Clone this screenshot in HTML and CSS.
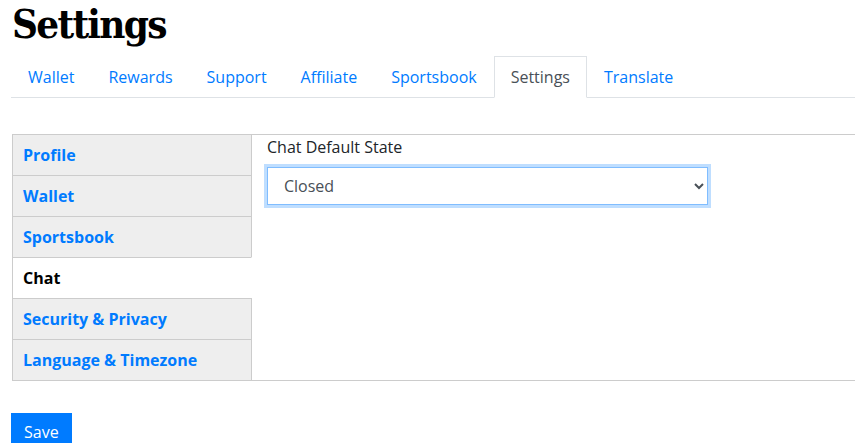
FILE: index.html
```html
<!DOCTYPE html>
<html lang="en">
<head>
    <meta charset="UTF-8">
    <meta name="viewport" content="width=device-width, initial-scale=1.0">
    <title>Settings</title>
    <link rel="stylesheet" href="styles.css">
</head>
<body>
    <div class="page">
        <!-- Header -->
        <h1 class="page-title">Settings</h1>

        <!-- Top tabs -->
        <ul class="nav-tabs">
            <li><a href="#" class="nav-link">Wallet</a></li>
            <li><a href="#" class="nav-link">Rewards</a></li>
            <li><a href="#" class="nav-link">Support</a></li>
            <li><a href="#" class="nav-link">Affiliate</a></li>
            <li><a href="#" class="nav-link">Sportsbook</a></li>
            <li><a href="#" class="nav-link active">Settings</a></li>
            <li><a href="#" class="nav-link">Translate</a></li>
        </ul>

        <!-- Settings panel -->
        <div class="settings-panel">
            <div class="side-menu">
                <a href="#" class="side-item">Profile</a>
                <a href="#" class="side-item">Wallet</a>
                <a href="#" class="side-item">Sportsbook</a>
                <a href="#" class="side-item active">Chat</a>
                <a href="#" class="side-item">Security &amp; Privacy</a>
                <a href="#" class="side-item">Language &amp; Timezone</a>
            </div>
            <div class="side-content">
                <label class="field-label" for="chat-state">Chat Default State</label>
                <select id="chat-state" class="form-select">
                    <option>Closed</option>
                    <option>Open</option>
                </select>
            </div>
        </div>

        <button class="btn-save">Save</button>
    </div>
</body>
</html>
```

FILE: styles.css
```css
/* Global Styling */
body {
    margin: 0;
    font-family: "Open Sans", Arial, sans-serif;
    font-size: 16px;
    line-height: 1.5;
    color: #212529;
    background: #ffffff;
    overflow: hidden;
}

.page {
    padding-left: 11px;
}

/* Header */
.page-title {
    margin: 0 0 8px 1px;
    font-family: "DejaVu Serif", Georgia, serif;
    font-stretch: condensed;
    font-weight: bold;
    font-size: 40px;
    line-height: 48px;
    letter-spacing: -1.7px;
    color: #000000;
}

/* Top tabs */
.nav-tabs {
    display: flex;
    list-style: none;
    margin: 0;
    padding: 0;
    border-bottom: 1px solid #dee2e6;
}

.nav-link {
    display: block;
    padding: 8px 16px;
    margin-bottom: -1px;
    border: 1px solid transparent;
    border-radius: 0;
    color: #007bff;
    text-decoration: none;
}

.nav-link.active {
    color: #495057;
    background: #ffffff;
    border-color: #dee2e6 #dee2e6 #ffffff;
}

/* Settings panel */
.settings-panel {
    display: flex;
    margin: 36px 0 0 1px;
}

.side-menu {
    display: flex;
    flex-direction: column;
    width: 240px;
    flex-shrink: 0;
}

.side-item {
    display: block;
    padding: 8px 10px;
    background: #eeeeee;
    border: 1px solid #cccccc;
    margin-top: -1px;
    font-weight: bold;
    color: #007bff;
    text-decoration: none;
}

.side-item:first-child {
    margin-top: 0;
}

.side-item.active {
    background: #ffffff;
    color: #000000;
    border-right-color: #ffffff;
}

.side-content {
    flex: 1;
    margin-left: -1px;
    padding: 0 16px;
    border-top: 1px solid #cccccc;
    border-bottom: 1px solid #cccccc;
}

.field-label {
    display: block;
    margin: 0 0 8px;
}

.form-select {
    display: block;
    width: 441px;
    height: 38px;
    padding: 6px 12px;
    font-family: "Open Sans", Arial, sans-serif;
    font-size: 16px;
    color: #495057;
    background: #ffffff;
    border: 1px solid #80bdff;
    border-radius: 0;
    outline: 0;
    box-shadow: 0 0 0 3px rgba(0, 123, 255, 0.25);
}

/* Save button */
.btn-save {
    margin-top: 32px;
    padding: 6px 12px;
    font-family: "Open Sans", Arial, sans-serif;
    font-size: 16px;
    line-height: 1.5;
    color: #ffffff;
    background: #007bff;
    border: 1px solid #007bff;
    border-radius: 0;
    cursor: pointer;
}
```
